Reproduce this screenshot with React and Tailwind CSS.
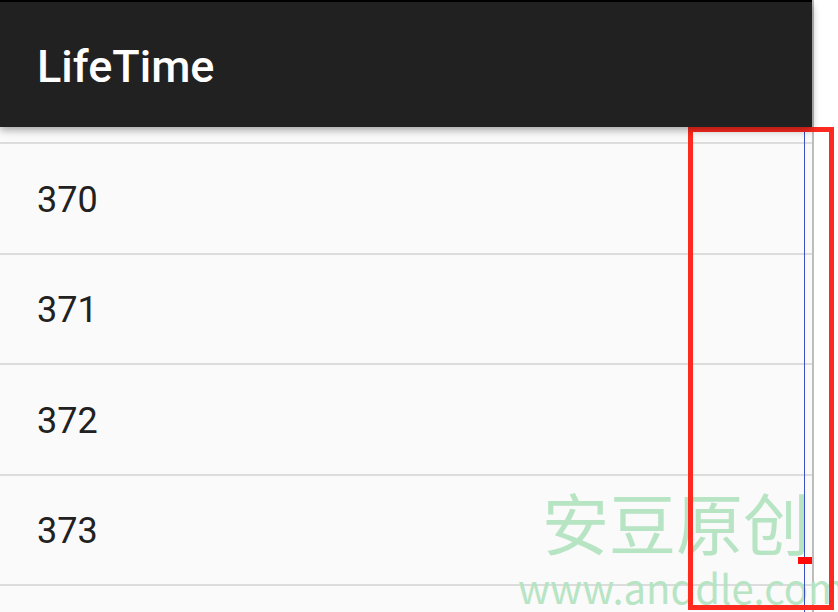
const rows = [370, 371, 372, 373];

export default function App() {
  return (
    <div className="relative w-[838px] h-[612px] overflow-hidden bg-white flex" style={{ fontFamily: "Roboto, 'Noto Sans', sans-serif" }}>
      <div className="w-[812px] h-full flex flex-col bg-[#fafafa]">
        <div className="h-[2px] bg-black" />
        <div className="relative z-10 h-[125px] shrink-0 bg-[#212121] flex items-center pl-[37px] shadow-[0_3px_8px_rgba(0,0,0,0.35)]">
          <h1 className="text-[45px] font-medium text-white leading-none pt-[4px]">LifeTime</h1>
        </div>
        <div className="flex-1 overflow-hidden">
          <div className="h-[17px] border-b-2 border-[#dcdcdc]" />
          {rows.map((n) => (
            <div key={n} className="h-[110.5px] border-b-2 border-[#dcdcdc] flex items-center pl-[37px] pt-[3px]">
              <span className="text-[36px] text-[#212121] leading-none">{n}</span>
            </div>
          ))}
        </div>
      </div>
      <div className="w-[2px] h-full bg-[#bdbdbd]" />
      <div className="flex-1 bg-white" />

      {/* watermark */}
      <div className="absolute left-[542px] top-[487px] text-[67px] leading-none text-[#b4e4c2] opacity-95 pointer-events-none" style={{ fontFamily: "'Noto Sans CJK SC', sans-serif" }}>
        安豆原创
      </div>
      <div className="absolute left-[518px] top-[567px] text-[40px] leading-none text-[#b4e4c2] opacity-95 pointer-events-none whitespace-nowrap" style={{ fontFamily: "'Noto Sans CJK SC', sans-serif" }}>
        www.anddle.com
      </div>

      {/* annotation overlays */}
      <div className="absolute left-[804px] top-[128px] bottom-0 w-px bg-[#3d4fc4]" />
      <div className="absolute left-[798px] top-[557px] w-[14px] h-[7px] bg-[#ff0a0a]" />
      <div className="absolute left-[688px] top-[127px] w-[146px] h-[483px] border-[5px] border-[#fe2a1f]" />
    </div>
  );
}
